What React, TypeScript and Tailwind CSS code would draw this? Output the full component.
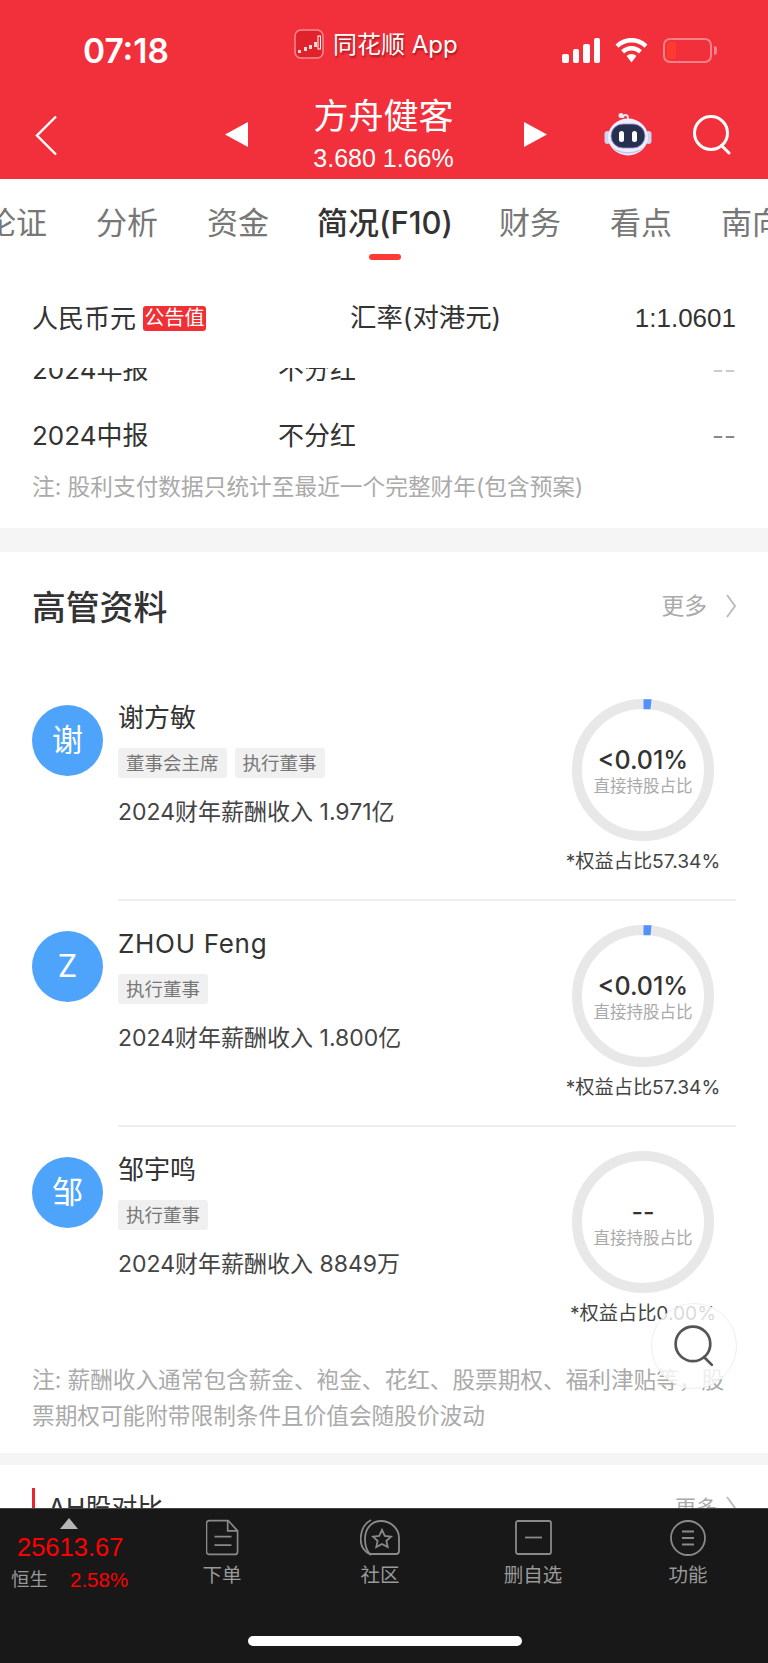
import React from "react";

const arial = "font-['Liberation_Sans','Noto_Sans_CJK_SC',sans-serif]";

function Logo() {
  return (
    <svg width="30" height="30" viewBox="0 0 30 30">
      <rect x="1" y="1" width="28" height="28" rx="6" fill="#e0222c" stroke="#f78a8f" strokeWidth="1.5" />
      <path d="M4 21h3v3H4zM10 18h3v4h-3zM15 16h3v4h-3zM20 13h3v5h-3z" fill="#ffd9d9" />
      <rect x="24" y="7" width="2.5" height="13" fill="#e0222c" stroke="#fff" strokeWidth="1" />
    </svg>
  );
}

function Robot() {
  return (
    <svg width="48" height="44" viewBox="0 0 48 44">
      <path d="M19 6c0-4 5-4 5 0v3" fill="none" stroke="#dfe1f5" strokeWidth="1.8" />
      <circle cx="17" cy="3.5" r="2.5" fill="#e8e8f5" />
      <rect x="0.5" y="19" width="6" height="13" rx="3" fill="#cfd3ee" />
      <rect x="41.5" y="19" width="6" height="13" rx="3" fill="#cfd3ee" />
      <ellipse cx="24" cy="25" rx="20" ry="18.5" fill="#eceefb" />
      <path d="M8 34c6 8 26 8 32 0-4 10-28 10-32 0z" fill="#c5c2f2" />
      <rect x="7" y="12" width="34" height="24" rx="12" fill="#25304f" stroke="#a78ae8" strokeWidth="0.8" />
      <rect x="15" y="19" width="5" height="11" rx="2.5" fill="#fff" />
      <rect x="28" y="19" width="5" height="11" rx="2.5" fill="#fff" />
    </svg>
  );
}

function Search({ size, color, width }: { size: number; color: string; width: number }) {
  return (
    <svg width={size} height={size} viewBox="0 0 40 40" fill="none" stroke={color} strokeWidth={width}>
      <circle cx="19" cy="18" r="16.5" />
      <path d="M29.5 30.5 37 38" strokeLinecap="round" />
    </svg>
  );
}

function StatusBar() {
  return (
    <div className="h-[100px] flex">
      <div className="w-[294px] pl-[83px] pt-[33px] text-[33.5px] leading-[36px] font-semibold text-white">07:18</div>
      <div className="w-[262px] flex pt-[29px] gap-[9px] items-start">
        <Logo />
        <span className="text-[24px] leading-[32px] text-white [text-shadow:1px_2px_2px_rgba(90,0,0,0.5)]">同花顺 App</span>
      </div>
      <div className="flex items-start pt-[38px] pl-[6px]">
        <div className="flex items-end gap-[4px] h-[25px] w-[38px]">
          <div className="w-[6.5px] h-[9px] rounded-[2px] bg-white" />
          <div className="w-[6.5px] h-[14px] rounded-[2px] bg-white" />
          <div className="w-[6.5px] h-[19px] rounded-[2px] bg-white" />
          <div className="w-[6.5px] h-[25px] rounded-[2px] bg-white" />
        </div>
        <svg className="ml-[15px]" width="33" height="25" viewBox="0 0 33 25" fill="#fff">
          <path d="M16.5 0C10 0 4.6 2.5.5 6.6l3 3.1C6.7 6.5 11.3 4.5 16.5 4.5s9.8 2 13 5.2l3-3.1C28.4 2.5 23 0 16.5 0z" />
          <path d="M16.5 8c-4 0-7.7 1.6-10.4 4.3l3 3.1c2-1.9 4.6-3 7.4-3s5.4 1.1 7.4 3l3-3.1C24.2 9.6 20.5 8 16.5 8z" />
          <path d="M16.5 16c-1.9 0-3.6.7-4.9 2l4.9 6.5 4.9-6.5c-1.3-1.3-3-2-4.9-2z" />
        </svg>
        <div className="ml-[15px] w-[49px] h-[25px] rounded-[7px] border-2 border-white/40 p-[2px]">
          <div className="w-[9px] h-full rounded-[3px] bg-[#ff3b30]" />
        </div>
        <div className="ml-[2px] mt-[8px] w-[3px] h-[9px] rounded-r-[3px] bg-white/40" />
      </div>
    </div>
  );
}

function NavBar() {
  return (
    <div className="h-[79px] flex items-start relative">
      <svg className="ml-[35px] mt-[15px]" width="23" height="41" viewBox="0 0 23 41" fill="none" stroke="#fff" strokeWidth="2.4">
        <path d="M21 1.5 2 20.5 21 39.5" />
      </svg>
      <svg className="ml-[167px] mt-[22px]" width="23" height="25" viewBox="0 0 23 25" fill="#fff">
        <path d="M23 0v25L0 12.5z" />
      </svg>
      <div className="w-[276px] pr-[5px] flex flex-col items-center text-white">
        <div className="text-[35px] leading-[44px] mt-[-6px]">方舟健客</div>
        <div className={`text-[25px] leading-[30px] mt-[5px] ${arial}`}>3.680 1.66%</div>
      </div>
      <svg className="mt-[22px]" width="23" height="25" viewBox="0 0 23 25" fill="#fff">
        <path d="M0 0v25L23 12.5z" />
      </svg>
      <div className="ml-[57px] mt-[12px]"><Robot /></div>
      <div className="ml-[40px] mt-[15px]"><Search size={40} color="#fff" width={3} /></div>
    </div>
  );
}

function Tabs() {
  const cls = "text-[31px] leading-[40px] text-[#777] shrink-0";
  return (
    <div className="h-[91px] bg-white overflow-hidden relative">
      <div className="flex gap-[49px] ml-[-15px] pt-[24px] w-[900px]">
        <span className={cls}>论证</span>
        <span className={cls}>分析</span>
        <span className={cls}>资金</span>
        <span className="ml-[-1px] mr-[-3px] text-[31px] leading-[40px] text-[#333] font-medium shrink-0 flex flex-col items-center">
          简况(F10)
          <span className="mt-[11px] w-[32px] h-[6px] rounded-[3px] bg-[#fd3a33]" />
        </span>
        <span className={cls}>财务</span>
        <span className={cls}>看点</span>
        <span className={cls}>南向</span>
      </div>
    </div>
  );
}

function Ring({ active, value, caption }: { active: boolean; value: string; caption: string }) {
  return (
    <div className="w-[160px] mr-[13px] flex flex-col items-center shrink-0">
      <div className="w-[142px] h-[142px] relative flex flex-col items-center pt-[46px]">
        <svg className="absolute inset-0" width="142" height="142" viewBox="0 0 142 142" fill="none">
          <circle cx="71" cy="71" r="66" stroke="#e8e8e8" strokeWidth="10" />
          {active && <path d="M71.5 0.2h8l-1 10h-7z" fill="#5291fb" />}
        </svg>
        <div className="text-[25px] leading-[30px] font-medium text-[#333] relative">{value}</div>
        <div className="text-[16.5px] leading-[24px] text-[#aaa] mt-[-1px] relative">直接持股占比</div>
      </div>
      <div className="mt-[5px] text-[19.2px] leading-[30px] text-[#444] whitespace-nowrap">{caption}</div>
    </div>
  );
}

function Person({
  initial, name, tags, income, value, caption, active, divider,
}: {
  initial: string; name: string; tags: string[]; income: string; value: string; caption: string; active: boolean; divider: boolean;
}) {
  return (
    <div className="pl-[32px] flex gap-[15px] items-start">
      <div className="w-[71px] h-[71px] mt-[30px] rounded-full bg-[#4ea4fb] text-white text-[31px] flex items-center justify-center shrink-0">
        {initial}
      </div>
      <div className={`flex-1 mr-[32px] flex justify-between pt-[24px] h-[226px] ${divider ? "border-b-2 border-[#eeeeee]" : ""}`}>
        <div>
          <div className={`text-[26px] leading-[30px] text-[#333] mt-[4px] ${initial === "Z" ? "tracking-[0.7px]" : ""}`}>{name}</div>
          <div className="flex gap-[8px] mt-[15px]">
            {tags.map((t) => (
              <span key={t} className="h-[30px] px-[8px] rounded-[3px] bg-[#f0f0f0] text-[18.5px] leading-[30px] text-[#777]">{t}</span>
            ))}
          </div>
          <div className="text-[23px] leading-[34px] text-[#444] mt-[17px]">{income}</div>
        </div>
        <Ring active={active} value={value} caption={caption} />
      </div>
    </div>
  );
}

function Chevron() {
  return (
    <svg width="10" height="24" viewBox="0 0 10 24" fill="none" stroke="#bbb" strokeWidth="1.8">
      <path d="M1 1l8 11-8 11" />
    </svg>
  );
}

function Body() {
  return (
    <div className="flex-1 min-h-0 overflow-hidden bg-white">
      <div className="h-[98px] pb-[2px] px-[32px] flex items-center text-[26px] text-[#333]">
        <div className="flex items-center gap-[7px] w-[318px]">
          人民币元
          <span className="h-[25px] w-[63px] rounded-[3px] bg-[#f03035] text-white text-[20px] leading-[25px] text-center">公告值</span>
        </div>
        <div className="w-[150px] whitespace-nowrap text-[26.4px]">汇率(对港元)</div>
        <div className={`flex-1 text-right ${arial}`}>1:1.0601</div>
      </div>
      <div className="h-[160px] overflow-hidden px-[32px]">
        <div className="mt-[-32px] h-[66px] flex items-center text-[26px] text-[#333]">
          <span className="w-[246px]">2024年报</span><span className="flex-1">不分红</span><span className="text-[#ccc]">--</span>
        </div>
        <div className="h-[66px] flex items-center text-[26px] text-[#333]">
          <span className="w-[246px]">2024中报</span><span className="flex-1">不分红</span><span className="text-[#888]">--</span>
        </div>
        <div className="mt-[1px] text-[22.7px] leading-[36px] text-[#aaa]">注: 股利支付数据只统计至最近一个完整财年(包含预案)</div>
      </div>
      <div className="h-[24px] bg-[#f5f5f5]" />
      <div className="h-[123px] pt-[35px] px-[32px] flex items-start justify-between">
        <div className="text-[33.8px] leading-[42px] font-medium text-[#333]">高管资料</div>
        <div className="flex items-center gap-[19px] text-[22.8px] text-[#aaa] h-[38px]">
          更多
          <Chevron />
        </div>
      </div>
      <Person initial="谢" name="谢方敏" tags={["董事会主席", "执行董事"]} income="2024财年薪酬收入 1.971亿" value="<0.01%" caption="*权益占比57.34%" active divider />
      <Person initial="Z" name="ZHOU Feng" tags={["执行董事"]} income="2024财年薪酬收入 1.800亿" value="<0.01%" caption="*权益占比57.34%" active divider />
      <div className="h-[235px]">
        <Person initial="邹" name="邹宇鸣" tags={["执行董事"]} income="2024财年薪酬收入 8849万" value="--" caption="*权益占比0.00%" active={false} divider={false} />
      </div>
      <div className="px-[32px] pb-[19px] text-[22.65px] leading-[36px] text-[#aaa]">
        注: 薪酬收入通常包含薪金、袍金、花红、股票期权、福利津贴等，股票期权可能附带限制条件且价值会随股价波动
      </div>
      <div className="h-[12px] bg-[#f5f5f5]" />
      <div className="pt-[23px] px-[32px] flex items-start">
        <div className="w-[3px] h-[40px] bg-[#e8262c]" />
        <div className="ml-[13px] text-[26px] leading-[40px] text-[#333] flex-1">AH股对比</div>
        <div className="flex items-center gap-[9px] text-[21px] text-[#aaa] h-[40px]">
          更多
          <Chevron />
        </div>
      </div>
    </div>
  );
}

function FootTab({ w, label, children, cls }: { w: string; label: string; children: React.ReactNode; cls?: string }) {
  return (
    <div className={`${w} ${cls ?? ""} flex flex-col items-center pt-[10px]`}>
      <div className="h-[37px] flex items-center justify-center">{children}</div>
      <div className="mt-[4px] text-[19.5px] leading-[30px] text-[#999]">{label}</div>
    </div>
  );
}

function Footer() {
  return (
    <div className="h-[155px] shrink-0 bg-[#181818] border-t border-[#444]">
      <div className="h-[127px] flex">
        <div className={`w-[144px] pl-[11px] pt-[9px] ${arial}`}>
          <svg className="ml-[49px]" width="18" height="11" viewBox="0 0 18 11" fill="#b5b5b5"><path d="M9 0l9 11H0z" /></svg>
          <div className="ml-[6px] mt-[3px] text-[25.5px] leading-[30px] text-[#ff0000]">25613.67</div>
          <div className="flex items-center mt-[2px] h-[32px]">
            <span className="text-[18.5px] text-[#999] w-[59px]">恒生</span>
            <span className="text-[20.5px] text-[#ff0000]">2.58%</span>
          </div>
        </div>
        <FootTab w="w-[156px]" label="下单">
          <svg width="33" height="37" viewBox="0 0 35 38" fill="none" stroke="#8a8a8a" strokeWidth="1.8">
            <path d="M3.5 1h20l10 11v22a3 3 0 0 1-3 3h-27a3 3 0 0 1-3-3V4a3 3 0 0 1 3-3z" />
            <path d="M23 1v11h10.5M9 18h18M9 27h18" />
          </svg>
        </FootTab>
        <FootTab w="w-[160px]" label="社区">
          <svg width="40" height="37" viewBox="0 0 40 37" fill="none" stroke="#8a8a8a" strokeWidth="1.8">
            <path d="M11 36C3 32 0 25 0.8 18 1.5 10 5 4 11 1" />
            <path d="M10 35c-3-3-5-9-5-15C5 9 12 2 21 2s18 7 18 17v13a3 3 0 0 1-3 3z" />
            <path d="M22 11l2.8 6 6.2.7-4.6 4.2 1.3 6.1-5.700-3.100-5.700 3.100 1.300-6.100-4.600-4.200 6.200-.7z" />
          </svg>
        </FootTab>
        <FootTab w="w-[146px]" label="删自选">
          <svg width="37" height="35" viewBox="0 0 37 35" fill="none" stroke="#8a8a8a" strokeWidth="1.8">
            <rect x="1" y="1" width="35" height="33" rx="2" />
            <path d="M10 17.5h17" />
          </svg>
        </FootTab>
        <FootTab w="w-[160px]" cls="pl-[4px]" label="功能">
          <svg width="36" height="36" viewBox="0 0 36 36" fill="none" stroke="#8a8a8a" strokeWidth="1.8">
            <circle cx="18" cy="18" r="17" />
            <path d="M12 11.5h12M12 18h12M12 24.5h12" strokeWidth="2" />
          </svg>
        </FootTab>
      </div>
      <div className="w-[274px] h-[10px] rounded-full bg-white ml-[248px]" />
    </div>
  );
}

export default function App() {
  return (
    <div className="w-[768px] h-[1663px] flex flex-col overflow-hidden relative bg-white font-['Inter','Noto_Sans_CJK_SC',sans-serif]">
      <div className="h-[179px] bg-[#f2303b] shrink-0">
        <StatusBar />
        <NavBar />
      </div>
      <Tabs />
      <Body />
      <Footer />
      <div className="absolute left-[651px] top-[1303px] w-[86px] h-[86px] rounded-full bg-white/80 border border-[#eeeeee] flex items-center justify-center">
        <Search size={42} color="#555" width={2.6} />
      </div>
    </div>
  );
}
